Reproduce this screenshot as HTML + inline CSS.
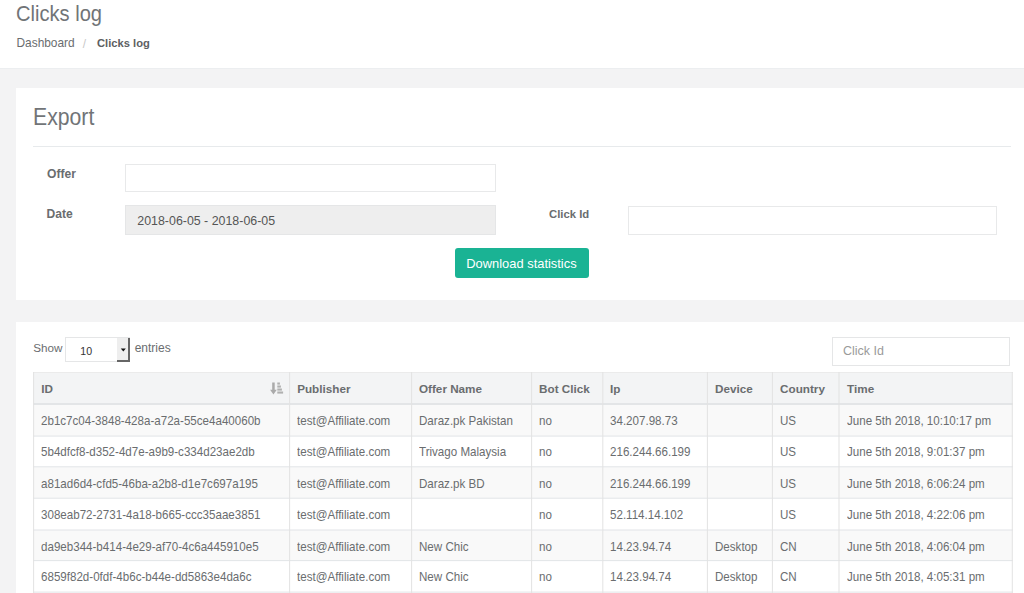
<!DOCTYPE html>
<html><head><meta charset="utf-8"><title>Clicks log</title>
<style>
html,body{margin:0;padding:0;}
body{width:1024px;height:593px;overflow:hidden;position:relative;background:#f3f3f4;
font-family:"Liberation Sans",sans-serif;}
.t{position:absolute;line-height:1;white-space:nowrap;}
.r{position:absolute;}
</style></head><body>
<div class="r" style="left:0px;top:0px;width:1024px;height:68px;background:#fff;border-bottom:1px solid #eceef0;box-sizing:content-box"></div>
<div class="t" style="left:16.00px;top:3.60px;font-size:21.5px;font-weight:normal;color:#717477;transform:scaleX(0.935);transform-origin:0 0;">Clicks log</div>
<div class="t" style="left:16.50px;top:37.93px;font-size:11.9px;font-weight:normal;color:#6a6d6f;">Dashboard</div>
<div class="t" style="left:82.80px;top:38.73px;font-size:11.9px;font-weight:normal;color:#c8c8c8;">/</div>
<div class="t" style="left:97.00px;top:37.82px;font-size:11.2px;font-weight:bold;color:#5d6062;">Clicks log</div>
<div class="r" style="left:16px;top:88px;width:1024px;height:212px;background:#fff"></div>
<div class="t" style="left:33.00px;top:105.56px;font-size:23.2px;font-weight:normal;color:#717477;transform:scaleX(0.915);transform-origin:0 0;">Export</div>
<div class="r" style="left:33px;top:146px;width:978px;height:1px;background:#e7eaec"></div>
<div class="t" style="left:47.00px;top:167.76px;font-size:12.1px;font-weight:bold;color:#6a6d6f;">Offer</div>
<div class="r" style="left:125px;top:164px;width:371px;height:28px;background:#fff;border:1px solid #e8e9ea;box-sizing:border-box"></div>
<div class="t" style="left:46.50px;top:208.16px;font-size:12.1px;font-weight:bold;color:#6a6d6f;">Date</div>
<div class="r" style="left:125px;top:205px;width:371px;height:30px;background:#eee;border:1px solid #e5e6e7;box-sizing:border-box"></div>
<div class="t" style="left:137.30px;top:214.90px;font-size:12.4px;font-weight:normal;color:#555;">2018-06-05 - 2018-06-05</div>
<div class="t" style="left:549.00px;top:208.83px;font-size:11.3px;font-weight:bold;color:#6a6d6f;">Click Id</div>
<div class="r" style="left:628px;top:206px;width:369px;height:29px;background:#fff;border:1px solid #e8e9ea;box-sizing:border-box"></div>
<div class="r" style="left:455px;top:248px;width:134px;height:30px;background:#1ab394;border-radius:3px"></div>
<div class="t" style="left:466.30px;top:257.98px;font-size:12.9px;font-weight:normal;color:#fff;">Download statistics</div>
<div class="r" style="left:16px;top:322px;width:1024px;height:271px;background:#fff"></div>
<div class="t" style="left:33.30px;top:342.00px;font-size:11.7px;font-weight:normal;color:#6a6d6f;">Show</div>
<div class="r" style="left:65px;top:337px;width:65px;height:25px;background:#fff;border:1px solid #e5e6e7;box-sizing:border-box"></div>
<div class="r" style="left:117px;top:338px;width:13px;height:24px;background:#eee;border-right:2px solid #666;border-bottom:2px solid #666;box-sizing:border-box"></div>
<svg class="r" style="left:120px;top:348px" width="7" height="4"><path d="M0.8 0.5 L5.8 0.5 L3.3 3.5 Z" fill="#111"/></svg>
<div class="t" style="left:80.30px;top:345.83px;font-size:10.6px;font-weight:normal;color:#333;">10</div>
<div class="t" style="left:134.70px;top:341.84px;font-size:12.0px;font-weight:normal;color:#6a6d6f;">entries</div>
<div class="r" style="left:832px;top:337px;width:178px;height:29px;background:#fff;border:1px solid #e5e6e7;box-sizing:border-box"></div>
<div class="t" style="left:842.90px;top:345.02px;font-size:12.5px;font-weight:normal;color:#9a9a9a;">Click Id</div>
<div class="r" style="left:33px;top:372px;width:979px;height:31px;background:#f3f4f5"></div>
<div class="r" style="left:33px;top:405px;width:979px;height:31px;background:#f9f9f9"></div>
<div class="r" style="left:33px;top:436px;width:979px;height:31px;background:#fff"></div>
<div class="r" style="left:33px;top:467px;width:979px;height:31px;background:#f9f9f9"></div>
<div class="r" style="left:33px;top:498px;width:979px;height:32px;background:#fff"></div>
<div class="r" style="left:33px;top:530px;width:979px;height:31px;background:#f9f9f9"></div>
<div class="r" style="left:33px;top:561px;width:979px;height:31px;background:#fff"></div>
<div class="r" style="left:33px;top:372px;width:980px;height:1px;background:#ebebeb"></div>
<div class="r" style="left:33px;top:403px;width:980px;height:2px;background:#e3e5e7"></div>
<div class="r" style="left:33px;top:435px;width:980px;height:1px;background:rgba(225,228,231,0.40)"></div>
<div class="r" style="left:33px;top:436px;width:980px;height:1px;background:rgba(225,228,231,0.60)"></div>
<div class="r" style="left:33px;top:466px;width:980px;height:1px;background:rgba(225,228,231,0.70)"></div>
<div class="r" style="left:33px;top:467px;width:980px;height:1px;background:rgba(225,228,231,0.30)"></div>
<div class="r" style="left:33px;top:497px;width:980px;height:1px;background:rgba(225,228,231,0.30)"></div>
<div class="r" style="left:33px;top:498px;width:980px;height:1px;background:rgba(225,228,231,0.70)"></div>
<div class="r" style="left:33px;top:529px;width:980px;height:1px;background:rgba(225,228,231,0.50)"></div>
<div class="r" style="left:33px;top:530px;width:980px;height:1px;background:rgba(225,228,231,0.50)"></div>
<div class="r" style="left:33px;top:560px;width:980px;height:1px;background:rgba(225,228,231,0.90)"></div>
<div class="r" style="left:33px;top:561px;width:980px;height:1px;background:rgba(225,228,231,0.10)"></div>
<div class="r" style="left:33px;top:591px;width:980px;height:1px;background:rgba(225,228,231,0.40)"></div>
<div class="r" style="left:33px;top:592px;width:980px;height:1px;background:rgba(225,228,231,0.60)"></div>
<div class="r" style="left:33px;top:372px;width:1px;height:221px;background:rgba(226,226,226,0.90)"></div>
<div class="r" style="left:34px;top:372px;width:1px;height:221px;background:rgba(226,226,226,0.10)"></div>
<div class="r" style="left:289px;top:372px;width:1px;height:221px;background:rgba(226,226,226,0.90)"></div>
<div class="r" style="left:290px;top:372px;width:1px;height:221px;background:rgba(226,226,226,0.10)"></div>
<div class="r" style="left:411px;top:372px;width:1px;height:221px;background:rgba(226,226,226,0.90)"></div>
<div class="r" style="left:412px;top:372px;width:1px;height:221px;background:rgba(226,226,226,0.10)"></div>
<div class="r" style="left:531px;top:372px;width:1px;height:221px;background:rgba(226,226,226,0.90)"></div>
<div class="r" style="left:532px;top:372px;width:1px;height:221px;background:rgba(226,226,226,0.10)"></div>
<div class="r" style="left:602px;top:372px;width:1px;height:221px;background:rgba(226,226,226,0.70)"></div>
<div class="r" style="left:603px;top:372px;width:1px;height:221px;background:rgba(226,226,226,0.30)"></div>
<div class="r" style="left:706px;top:372px;width:1px;height:221px;background:rgba(226,226,226,0.10)"></div>
<div class="r" style="left:707px;top:372px;width:1px;height:221px;background:rgba(226,226,226,0.90)"></div>
<div class="r" style="left:771px;top:372px;width:1px;height:221px;background:rgba(226,226,226,0.10)"></div>
<div class="r" style="left:772px;top:372px;width:1px;height:221px;background:rgba(226,226,226,0.90)"></div>
<div class="r" style="left:838px;top:372px;width:1px;height:221px;background:rgba(226,226,226,0.50)"></div>
<div class="r" style="left:839px;top:372px;width:1px;height:221px;background:rgba(226,226,226,0.50)"></div>
<div class="r" style="left:1011px;top:372px;width:1px;height:221px;background:rgba(226,226,226,0.20)"></div>
<div class="r" style="left:1012px;top:372px;width:1px;height:221px;background:rgba(226,226,226,0.80)"></div>
<div class="t" style="left:41.30px;top:383.30px;font-size:11.7px;font-weight:bold;color:#6a6d6f;">ID</div>
<div class="t" style="left:297.20px;top:383.30px;font-size:11.7px;font-weight:bold;color:#6a6d6f;">Publisher</div>
<div class="t" style="left:419.00px;top:383.30px;font-size:11.7px;font-weight:bold;color:#6a6d6f;">Offer Name</div>
<div class="t" style="left:539.10px;top:383.30px;font-size:11.7px;font-weight:bold;color:#6a6d6f;">Bot Click</div>
<div class="t" style="left:610.10px;top:383.30px;font-size:11.7px;font-weight:bold;color:#6a6d6f;">Ip</div>
<div class="t" style="left:715.10px;top:383.30px;font-size:11.7px;font-weight:bold;color:#6a6d6f;">Device</div>
<div class="t" style="left:780.10px;top:383.30px;font-size:11.7px;font-weight:bold;color:#6a6d6f;">Country</div>
<div class="t" style="left:847.10px;top:383.30px;font-size:11.7px;font-weight:bold;color:#6a6d6f;">Time</div>
<svg class="r" style="left:260px;top:375px" width="30" height="25" viewBox="260 375 30 25"><path d="M272.2 382.6 L274.7 382.6 L274.7 389.8 L276.8 389.8 L273.45 394.4 L270.1 389.8 L272.2 389.8 Z" fill="#aaaaaa"/><rect x="277.3" y="382.5" width="2.6" height="2.1" fill="#b0b0b0"/><rect x="277.3" y="385.5" width="3.6" height="2.1" fill="#b0b0b0"/><rect x="277.3" y="388.5" width="4.6" height="2.1" fill="#b0b0b0"/><rect x="277.3" y="391.5" width="5.8" height="2.1" fill="#b0b0b0"/></svg>
<div class="t" style="left:40.60px;top:414.67px;font-size:12.2px;font-weight:normal;color:#6a6d6f;transform:scaleX(0.95);transform-origin:0 0;">2b1c7c04-3848-428a-a72a-55ce4a40060b</div>
<div class="t" style="left:297.20px;top:414.67px;font-size:12.2px;font-weight:normal;color:#6a6d6f;transform:scaleX(0.95);transform-origin:0 0;">test@Affiliate.com</div>
<div class="t" style="left:419.00px;top:414.67px;font-size:12.2px;font-weight:normal;color:#6a6d6f;transform:scaleX(0.95);transform-origin:0 0;">Daraz.pk Pakistan</div>
<div class="t" style="left:539.10px;top:414.67px;font-size:12.2px;font-weight:normal;color:#6a6d6f;transform:scaleX(0.95);transform-origin:0 0;">no</div>
<div class="t" style="left:610.10px;top:414.67px;font-size:12.2px;font-weight:normal;color:#6a6d6f;transform:scaleX(0.95);transform-origin:0 0;">34.207.98.73</div>
<div class="t" style="left:780.10px;top:414.67px;font-size:12.2px;font-weight:normal;color:#6a6d6f;transform:scaleX(0.95);transform-origin:0 0;">US</div>
<div class="t" style="left:847.10px;top:414.67px;font-size:12.2px;font-weight:normal;color:#6a6d6f;transform:scaleX(0.95);transform-origin:0 0;">June 5th 2018, 10:10:17 pm</div>
<div class="t" style="left:40.60px;top:445.77px;font-size:12.2px;font-weight:normal;color:#6a6d6f;transform:scaleX(0.95);transform-origin:0 0;">5b4dfcf8-d352-4d7e-a9b9-c334d23ae2db</div>
<div class="t" style="left:297.20px;top:445.77px;font-size:12.2px;font-weight:normal;color:#6a6d6f;transform:scaleX(0.95);transform-origin:0 0;">test@Affiliate.com</div>
<div class="t" style="left:419.00px;top:445.77px;font-size:12.2px;font-weight:normal;color:#6a6d6f;transform:scaleX(0.95);transform-origin:0 0;">Trivago Malaysia</div>
<div class="t" style="left:539.10px;top:445.77px;font-size:12.2px;font-weight:normal;color:#6a6d6f;transform:scaleX(0.95);transform-origin:0 0;">no</div>
<div class="t" style="left:610.10px;top:445.77px;font-size:12.2px;font-weight:normal;color:#6a6d6f;transform:scaleX(0.95);transform-origin:0 0;">216.244.66.199</div>
<div class="t" style="left:780.10px;top:445.77px;font-size:12.2px;font-weight:normal;color:#6a6d6f;transform:scaleX(0.95);transform-origin:0 0;">US</div>
<div class="t" style="left:847.10px;top:445.77px;font-size:12.2px;font-weight:normal;color:#6a6d6f;transform:scaleX(0.95);transform-origin:0 0;">June 5th 2018, 9:01:37 pm</div>
<div class="t" style="left:40.60px;top:477.97px;font-size:12.2px;font-weight:normal;color:#6a6d6f;transform:scaleX(0.95);transform-origin:0 0;">a81ad6d4-cfd5-46ba-a2b8-d1e7c697a195</div>
<div class="t" style="left:297.20px;top:477.97px;font-size:12.2px;font-weight:normal;color:#6a6d6f;transform:scaleX(0.95);transform-origin:0 0;">test@Affiliate.com</div>
<div class="t" style="left:419.00px;top:477.97px;font-size:12.2px;font-weight:normal;color:#6a6d6f;transform:scaleX(0.95);transform-origin:0 0;">Daraz.pk BD</div>
<div class="t" style="left:539.10px;top:477.97px;font-size:12.2px;font-weight:normal;color:#6a6d6f;transform:scaleX(0.95);transform-origin:0 0;">no</div>
<div class="t" style="left:610.10px;top:477.97px;font-size:12.2px;font-weight:normal;color:#6a6d6f;transform:scaleX(0.95);transform-origin:0 0;">216.244.66.199</div>
<div class="t" style="left:780.10px;top:477.97px;font-size:12.2px;font-weight:normal;color:#6a6d6f;transform:scaleX(0.95);transform-origin:0 0;">US</div>
<div class="t" style="left:847.10px;top:477.97px;font-size:12.2px;font-weight:normal;color:#6a6d6f;transform:scaleX(0.95);transform-origin:0 0;">June 5th 2018, 6:06:24 pm</div>
<div class="t" style="left:40.60px;top:508.97px;font-size:12.2px;font-weight:normal;color:#6a6d6f;transform:scaleX(0.95);transform-origin:0 0;">308eab72-2731-4a18-b665-ccc35aae3851</div>
<div class="t" style="left:297.20px;top:508.97px;font-size:12.2px;font-weight:normal;color:#6a6d6f;transform:scaleX(0.95);transform-origin:0 0;">test@Affiliate.com</div>
<div class="t" style="left:539.10px;top:508.97px;font-size:12.2px;font-weight:normal;color:#6a6d6f;transform:scaleX(0.95);transform-origin:0 0;">no</div>
<div class="t" style="left:610.10px;top:508.97px;font-size:12.2px;font-weight:normal;color:#6a6d6f;transform:scaleX(0.95);transform-origin:0 0;">52.114.14.102</div>
<div class="t" style="left:780.10px;top:508.97px;font-size:12.2px;font-weight:normal;color:#6a6d6f;transform:scaleX(0.95);transform-origin:0 0;">US</div>
<div class="t" style="left:847.10px;top:508.97px;font-size:12.2px;font-weight:normal;color:#6a6d6f;transform:scaleX(0.95);transform-origin:0 0;">June 5th 2018, 4:22:06 pm</div>
<div class="t" style="left:40.60px;top:540.67px;font-size:12.2px;font-weight:normal;color:#6a6d6f;transform:scaleX(0.95);transform-origin:0 0;">da9eb344-b414-4e29-af70-4c6a445910e5</div>
<div class="t" style="left:297.20px;top:540.67px;font-size:12.2px;font-weight:normal;color:#6a6d6f;transform:scaleX(0.95);transform-origin:0 0;">test@Affiliate.com</div>
<div class="t" style="left:419.00px;top:540.67px;font-size:12.2px;font-weight:normal;color:#6a6d6f;transform:scaleX(0.95);transform-origin:0 0;">New Chic</div>
<div class="t" style="left:539.10px;top:540.67px;font-size:12.2px;font-weight:normal;color:#6a6d6f;transform:scaleX(0.95);transform-origin:0 0;">no</div>
<div class="t" style="left:610.10px;top:540.67px;font-size:12.2px;font-weight:normal;color:#6a6d6f;transform:scaleX(0.95);transform-origin:0 0;">14.23.94.74</div>
<div class="t" style="left:715.10px;top:540.67px;font-size:12.2px;font-weight:normal;color:#6a6d6f;transform:scaleX(0.95);transform-origin:0 0;">Desktop</div>
<div class="t" style="left:780.10px;top:540.67px;font-size:12.2px;font-weight:normal;color:#6a6d6f;transform:scaleX(0.95);transform-origin:0 0;">CN</div>
<div class="t" style="left:847.10px;top:540.67px;font-size:12.2px;font-weight:normal;color:#6a6d6f;transform:scaleX(0.95);transform-origin:0 0;">June 5th 2018, 4:06:04 pm</div>
<div class="t" style="left:40.60px;top:571.07px;font-size:12.2px;font-weight:normal;color:#6a6d6f;transform:scaleX(0.95);transform-origin:0 0;">6859f82d-0fdf-4b6c-b44e-dd5863e4da6c</div>
<div class="t" style="left:297.20px;top:571.07px;font-size:12.2px;font-weight:normal;color:#6a6d6f;transform:scaleX(0.95);transform-origin:0 0;">test@Affiliate.com</div>
<div class="t" style="left:419.00px;top:571.07px;font-size:12.2px;font-weight:normal;color:#6a6d6f;transform:scaleX(0.95);transform-origin:0 0;">New Chic</div>
<div class="t" style="left:539.10px;top:571.07px;font-size:12.2px;font-weight:normal;color:#6a6d6f;transform:scaleX(0.95);transform-origin:0 0;">no</div>
<div class="t" style="left:610.10px;top:571.07px;font-size:12.2px;font-weight:normal;color:#6a6d6f;transform:scaleX(0.95);transform-origin:0 0;">14.23.94.74</div>
<div class="t" style="left:715.10px;top:571.07px;font-size:12.2px;font-weight:normal;color:#6a6d6f;transform:scaleX(0.95);transform-origin:0 0;">Desktop</div>
<div class="t" style="left:780.10px;top:571.07px;font-size:12.2px;font-weight:normal;color:#6a6d6f;transform:scaleX(0.95);transform-origin:0 0;">CN</div>
<div class="t" style="left:847.10px;top:571.07px;font-size:12.2px;font-weight:normal;color:#6a6d6f;transform:scaleX(0.95);transform-origin:0 0;">June 5th 2018, 4:05:31 pm</div>

</body></html>
